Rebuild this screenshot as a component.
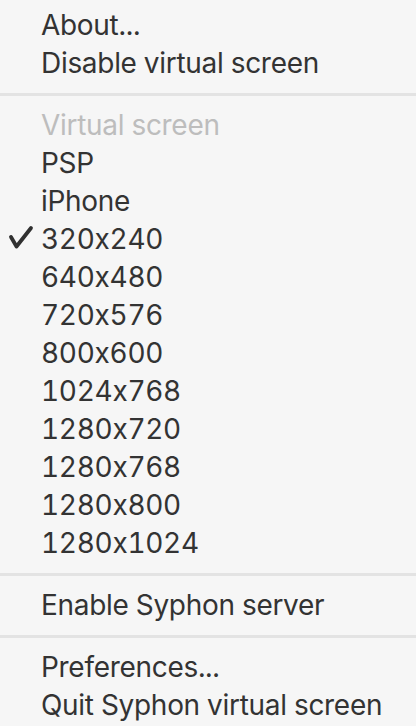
const sections: { label: string; disabled?: boolean; checked?: boolean }[][] = [
  [{ label: "About..." }, { label: "Disable virtual screen" }],
  [
    { label: "Virtual screen", disabled: true },
    { label: "PSP" },
    { label: "iPhone" },
    { label: "320x240", checked: true },
    { label: "640x480" },
    { label: "720x576" },
    { label: "800x600" },
    { label: "1024x768" },
    { label: "1280x720" },
    { label: "1280x768" },
    { label: "1280x800" },
    { label: "1280x1024" },
  ],
  [{ label: "Enable Syphon server" }],
  [{ label: "Preferences..." }, { label: "Quit Syphon virtual screen" }],
];

function Check() {
  return (
    <svg width="26" height="25" viewBox="0 0 26 25" className="absolute left-[8px] top-[5px]">
      <path
        d="M3 12 L8.5 21.5 L23 3"
        fill="none"
        stroke="#303030"
        strokeWidth="3.8"
        strokeLinecap="round"
        strokeLinejoin="round"
      />
    </svg>
  );
}

export default function App() {
  return (
    <div className="w-[416px] h-[726px] overflow-hidden bg-[#f6f6f6] pt-[6px] font-['Inter',sans-serif] text-[28px] leading-[38px] tabular-nums">
      {sections.map((items, i) => (
        <div key={i}>
          {i > 0 && (
            <div className="py-[10.5px]">
              <div className="h-[3px] bg-[#e3e3e3]" />
            </div>
          )}
          {items.map((it) => (
            <div
              key={it.label}
              className={
                "relative h-[38px] pl-[41px] whitespace-nowrap tracking-[-0.3px] " +
                (it.disabled ? "text-[#bdbdbd]" : "text-[#333333]")
              }
            >
              {it.checked && <Check />}
              {it.label}
            </div>
          ))}
        </div>
      ))}
    </div>
  );
}
